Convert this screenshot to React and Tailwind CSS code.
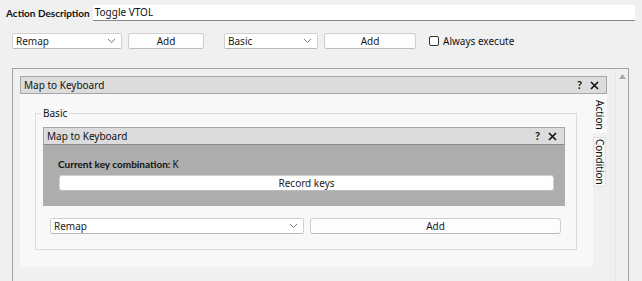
import React from 'react';

const font = "font-['Noto_Sans','Open_Sans',sans-serif]";
const bold = "font-['Lato','Noto_Sans',sans-serif] font-bold text-[10px]";

const Chevron = () => (
    <svg width="9" height="6" viewBox="0 0 9 6" className="shrink-0">
        <path d="M1 1 L4.5 4.5 L8 1" fill="none" stroke="#7a7a7a" strokeWidth="1" />
    </svg>
);

const Combo = ({ label, className }) => (
    <div className={`h-[16px] flex items-center justify-between px-[3px] pr-[5px] bg-white border border-[#d0d0d0] border-b-[#b8b8b8] rounded-[2px] text-[10px] text-[#1a1a1a] ${className}`}>
        <span>{label}</span>
        <Chevron />
    </div>
);

const Button = ({ label, className }) => (
    <div className={`h-[16px] flex items-center justify-center bg-[#fdfdfd] border border-[#d0d0d0] border-b-[#bcbcbc] rounded-[3px] text-[10px] text-[#1a1a1a] ${className}`}>
        {label}
    </div>
);

const Close = () => (
    <svg width="9" height="9" viewBox="0 0 9 9">
        <path d="M1 1 L8 8 M8 1 L1 8" stroke="#111" strokeWidth="1.6" />
    </svg>
);

const TitleBar = ({ className }) => (
    <div className={`h-[18px] flex items-center justify-between pl-[3px] pr-[7px] bg-[#dcdcdc] border border-[#a6a6a6] text-[10px] text-[#111] ${className}`}>
        <span>Map to Keyboard</span>
        <div className="flex items-center gap-[8px]">
            <span className="font-['Lato','Noto_Sans',sans-serif] font-bold text-[11px]">?</span>
            <Close />
        </div>
    </div>
);

export default function App() {
    return (
        <div className={`w-[642px] h-[281px] overflow-hidden bg-[#f0f0f0] ${font}`}>
            {/* description row */}
            <div className="flex items-center w-[629px] h-[16px] mt-[5px] ml-[6px]">
                <span className={`shrink-0 whitespace-nowrap text-[#111] ${bold}`}>Action Description</span>
                <div className="flex-1 ml-[3px] h-[16px] flex items-center pl-[2px] bg-white border-b border-[#8a8a8a] text-[10px] text-[#111]">
                    Toggle VTOL
                </div>
            </div>

            {/* toolbar row */}
            <div className="flex items-center mt-[12px] ml-[12px]">
                <Combo label="Remap" className="w-[110px]" />
                <Button label="Add" className="w-[76px] ml-[6px]" />
                <Combo label="Basic" className="w-[94px] ml-[20px]" />
                <Button label="Add" className="w-[92px] ml-[6px]" />
                <div className="ml-[13px] w-[10px] h-[10px] border border-[#333] rounded-[2px] bg-white" />
                <span className="ml-[4px] text-[10px] text-[#111]">Always execute</span>
            </div>

            {/* scroll area */}
            <div className="mt-[19px] ml-[12px] w-[617px] h-[220px] flex border-l border-t border-r border-[#a0a0a0]">
                <div className="w-[602px] pt-[7px] pl-[7px]">
                    <div className="w-[587px]">
                        <TitleBar />
                        <div className="flex">
                            <div className="w-[573px] h-[173px] bg-[#f8f8f8] pt-[19px] pl-[15px]">
                                <div className="relative w-[542px] h-[137px] border border-[#dcdcdc] pt-[13px] pl-[7px]">
                                    <span className="absolute -top-[8px] left-[5px] px-[2px] bg-[#f8f8f8] text-[10px] text-[#111]">Basic</span>
                                    <div className="w-[522px]">
                                        <TitleBar className="border-b-[#8c8c8c]" />
                                        <div className="h-[61px] bg-[#adadad] pl-[15px] pt-[11px]">
                                            <div className="flex items-center h-[16px] text-[10px] text-[#111]">
                                                <span className={bold}>Current key combination:</span>
                                                <span className="ml-[2px]">K</span>
                                            </div>
                                            <Button label="Record keys" className="w-[495px] h-[15px] mt-[3px] ml-[1px] bg-white" />
                                        </div>
                                    </div>
                                    <div className="flex items-center mt-[12px] ml-[7px]">
                                        <Combo label="Remap" className="w-[254px]" />
                                        <Button label="Add" className="w-[251px] ml-[6px]" />
                                    </div>
                                </div>
                            </div>
                            <div className="w-[14px] flex flex-col">
                                <div className="h-[39px] bg-[#f8f8f8] flex justify-center pt-[3px] text-[10px] text-[#111] [writing-mode:vertical-rl]">
                                    Action
                                </div>
                                <div className="mt-[4px] w-[13px] h-[50px] bg-[#f6f6f6] border border-[#e2e2e2] flex items-center justify-center text-[10px] text-[#111] [writing-mode:vertical-rl]">
                                    Condition
                                </div>
                            </div>
                        </div>
                    </div>
                </div>
                <div className="w-[13px] border-l border-[#e6e6e6] flex justify-center pt-[5px]">
                    <svg width="7" height="5" viewBox="0 0 7 5">
                        <path d="M0 5 L3.5 0 L7 5 Z" fill="#a8a8a8" />
                    </svg>
                </div>
            </div>
        </div>
    );
}
